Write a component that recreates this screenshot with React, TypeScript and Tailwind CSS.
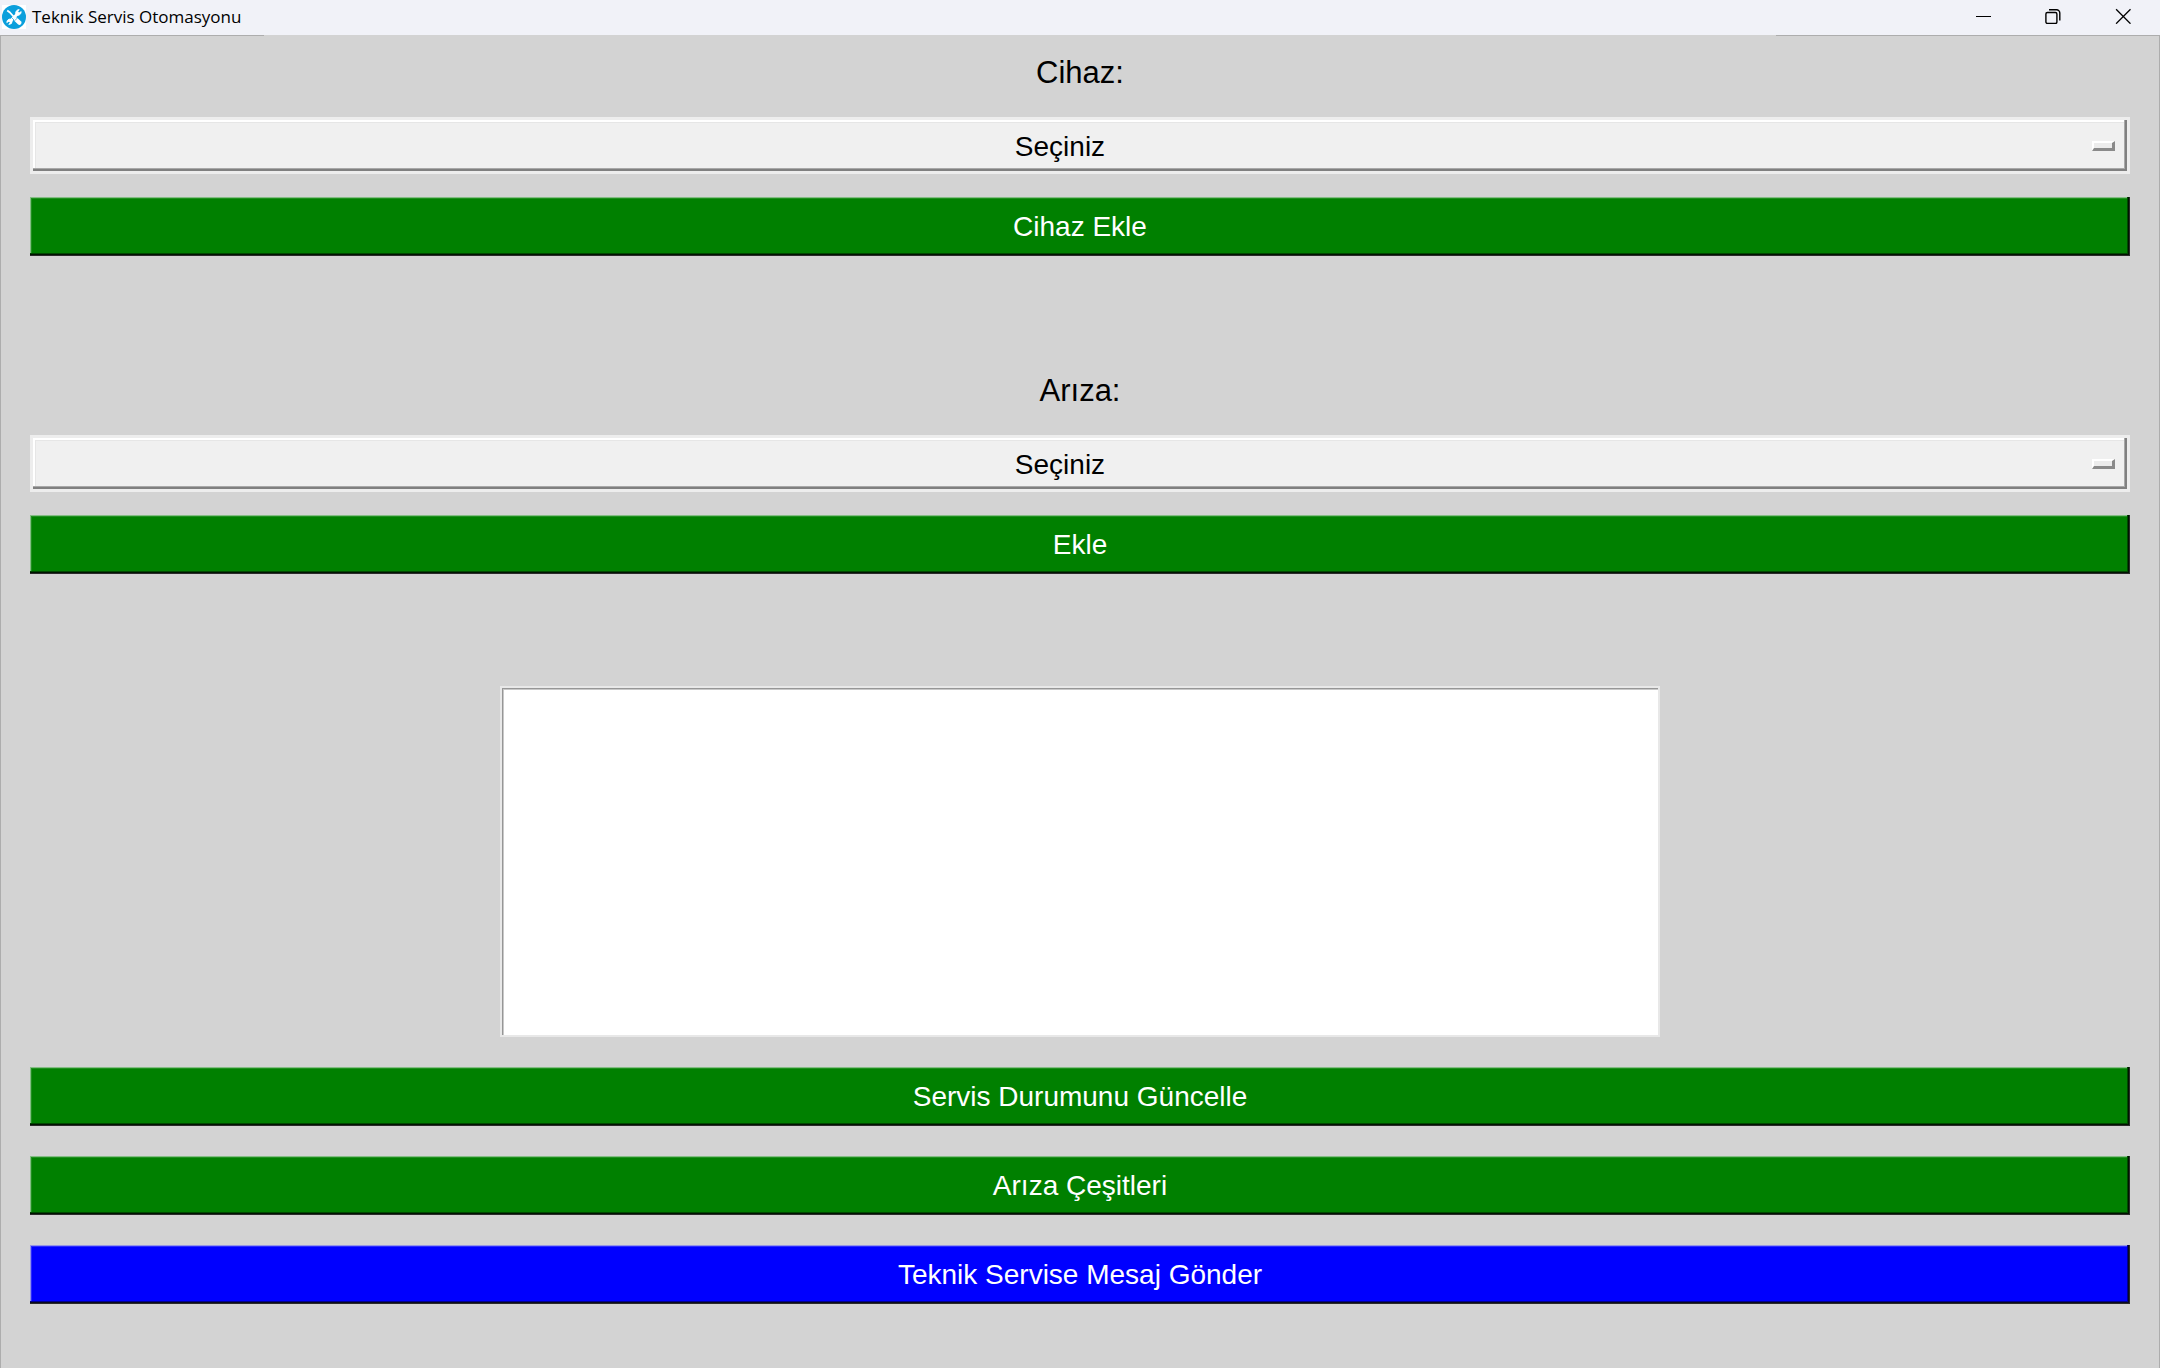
import type { ReactNode } from "react";

function AppIcon() {
  return (
    <svg viewBox="0 0 24 24" className="size-6 shrink-0 bg-white" aria-hidden="true">
      <circle cx="12" cy="12" r="12" fill="#0a9fdc" />
      <g stroke="#fff" fill="none">
        <path d="M7.5 17 16 8.2" strokeWidth="3" />
        <path d="M19.2 6.6 17 8 15.8 6.8 17.2 4.6A3.6 3.6 0 0 0 13.6 8.4L15.6 10.4A3.6 3.6 0 0 0 19.2 6.6Z" fill="#fff" strokeWidth="0.8" />
        <path d="M4.8 17.6 7 16.2 8.2 17.4 6.8 19.4A3.4 3.4 0 0 0 10.2 15.8L8.4 14A3.4 3.4 0 0 0 4.8 17.6Z" fill="#fff" strokeWidth="0.8" />
        <path d="M5.2 5.6 7.6 7.2 12 12" strokeWidth="1.8" />
        <path d="M14 14.4 17.4 17.8" strokeWidth="4.2" strokeLinecap="round" />
        <path d="M12.6 15.8 15.6 12.8M9.6 12.6 12 15" stroke="#0a9fdc" strokeWidth="0.7" />
      </g>
    </svg>
  );
}

function TitleBar() {
  const control = "flex h-full w-[70px] items-center justify-center";
  return (
    <header className="bg-[#f1f2f8]">
      <div className="flex h-[35px] items-center">
        <div className="flex flex-1 items-center gap-1.5 pb-px pl-0.5">
          <AppIcon />
          <h1 className="font-['Open_Sans',sans-serif] text-[17px] leading-6 text-black">Teknik Servis Otomasyonu</h1>
        </div>
        <div className="flex h-full pr-0.5 pb-[3px]">
          <button type="button" aria-label="Simge durumuna küçült" className={control}>
            <svg viewBox="0 0 16 16" className="size-4" fill="none" stroke="#000"><path d="M1 8.5h15" /></svg>
          </button>
          <button type="button" aria-label="Önceki boyut" className={control}>
            <svg viewBox="0 0 16 16" className="size-4" fill="none" stroke="#000" strokeWidth="1.4">
              <rect x="0.9" y="4.5" width="11" height="11" rx="1.5" />
              <path d="M4 1.7h7.5a3.3 3.3 0 0 1 3.3 3.3V12.5" />
            </svg>
          </button>
          <button type="button" aria-label="Kapat" className={control}>
            <svg viewBox="0 0 16 16" className="size-4" fill="none" stroke="#000" strokeWidth="1.3"><path d="m1.1 1.3 14.4 14.4M15.5 1.3 1.1 15.7" /></svg>
          </button>
        </div>
      </div>
      <div className="flex h-px justify-between bg-[#d3d3d3]">
        <span className="w-66 bg-[#adadad]" />
        <span className="w-96 bg-[#adadad]" />
      </div>
    </header>
  );
}

function OptionMenu({ id, label }: { id: string; label: string }) {
  return (
    <div className="flex flex-col gap-[26px]">
      <label htmlFor={id} className="self-center text-[31px] leading-9">{label}</label>
      <div className="relative border-3 border-[#ededed]">
        <select
          id={id}
          className="block h-[51px] w-full appearance-none rounded-none bg-[#f0f0f0] pt-0.5 pr-10 text-center text-[28px] leading-8 text-black shadow-[inset_-2px_-2px_#808080,inset_-3px_-3px_#a8a8a8,inset_2px_2px_#ffffff,inset_3px_3px_#e6e6e6] [text-align-last:center]"
        >
          <option>Seçiniz</option>
        </select>
        <span className="pointer-events-none absolute top-[21px] right-3 h-[10px] w-[23px] border-t-2 border-r-3 border-b-3 border-l-2 border-t-white border-r-[#8a8a8a] border-b-[#8a8a8a] border-l-white bg-[#ececec]" />
      </div>
    </div>
  );
}

function ActionButton({ tone = "green", children }: { tone?: "green" | "blue"; children: ReactNode }) {
  const tones = {
    green: "bg-[#008000] shadow-[inset_-1px_-1px_#2a2a2a,inset_-2px_-2px_#001400,inset_-3px_-3px_#004800,inset_1px_1px_#84bd84,inset_2px_2px_#1f8f1f]",
    blue: "bg-[#0000ff] shadow-[inset_-1px_-1px_#2a2a2a,inset_-2px_-2px_#0a0a20,inset_-3px_-3px_#000090,inset_1px_1px_#9494e8,inset_2px_2px_#2a2aff]",
  };
  return (
    <button type="button" className={`h-[59px] w-full text-[28px] leading-8 text-white ${tones[tone]}`}>
      {children}
    </button>
  );
}

export default function App() {
  return (
    <div className="flex min-h-screen flex-col bg-[#d3d3d3] font-['Liberation_Sans',Arial,sans-serif] text-black">
      <TitleBar />
      <main className="flex flex-1 flex-col border-x border-[#adadad] px-[29px] pt-[19px] pb-16">
        <section className="flex flex-col gap-[23px]">
          <OptionMenu id="cihaz" label="Cihaz:" />
          <ActionButton>Cihaz Ekle</ActionButton>
        </section>
        <section className="mt-[117px] flex flex-col gap-[23px]">
          <OptionMenu id="ariza" label="Arıza:" />
          <ActionButton>Ekle</ActionButton>
        </section>
        <select
          multiple
          aria-label="Servis kayıtları"
          className="mt-28 h-[351px] w-[1160px] max-w-full appearance-none self-center overflow-hidden rounded-none border-2 border-[#e8e8e8] bg-white shadow-[inset_1px_1px_#969696,inset_2px_2px_#c8c8c8]"
        />
        <div className="mt-[30px] flex flex-col gap-[30px]">
          <ActionButton>Servis Durumunu Güncelle</ActionButton>
          <ActionButton>Arıza Çeşitleri</ActionButton>
          <ActionButton tone="blue">Teknik Servise Mesaj Gönder</ActionButton>
        </div>
      </main>
    </div>
  );
}
